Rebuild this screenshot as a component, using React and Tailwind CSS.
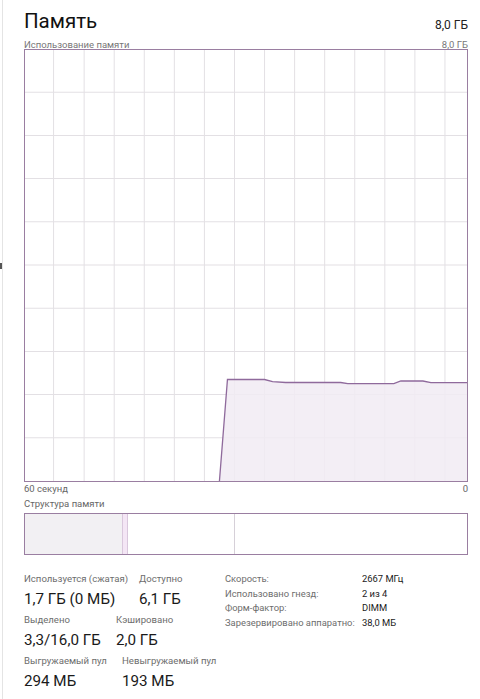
import React from "react";

const font = { fontFamily: 'Roboto, "Noto Sans", sans-serif' };

const vLines = [53.5, 84, 114, 144, 174, 204, 234, 264, 294, 324, 354, 384, 414, 444];
const hLines = [1, 2, 3, 4, 5, 6, 7, 8, 9].map((k) => 49 + k * 43.2);

const usage = [
  [219, 481],
  [227, 379.5],
  [264, 379.5],
  [272, 381.7],
  [285, 382.5],
  [340, 382.5],
  [347, 383.7],
  [393, 383.7],
  [400, 381],
  [422, 381],
  [430, 382.7],
  [466, 382.7],
];

function UsageChart() {
  const line = usage.map((p) => p.join(",")).join(" ");
  const area = line + " 466,481";
  return (
    <div className="h-[433px] w-full border border-[#9a7ea1] bg-white">
      <svg viewBox="25 50 441 431" preserveAspectRatio="none" className="block h-full w-full">
        {vLines.map((x) => (
          <line key={"v" + x} x1={x} y1={50} x2={x} y2={481} stroke="#e3e0e4" strokeWidth="1" />
        ))}
        {hLines.map((y) => (
          <line key={"h" + y} x1={25} y1={y} x2={466} y2={y} stroke="#e3e0e4" strokeWidth="1" />
        ))}
        <polygon points={area} fill="#f1ebf3" fillOpacity="0.85" />
        <polyline points={line} fill="none" stroke="#8f6a9c" strokeWidth="1.3" />
      </svg>
    </div>
  );
}

function Stat({ label, value, className }) {
  return (
    <div className={"whitespace-nowrap " + (className || "")}>
      <div className="text-[9.6px] leading-[14px] text-[#6d6d6d]">{label}</div>
      <div className="mt-[3px] text-[15.2px] leading-[20px] text-[#1a1a1a]">{value}</div>
    </div>
  );
}

export default function App() {
  return (
    <div style={font} className="relative h-[699px] w-[480px] overflow-hidden bg-white">
      {/* splitter at the window's left edge */}
      <div className="absolute left-[2px] top-0 h-full w-px bg-[#e4e4e4]" />
      <div className="absolute left-0 top-[263px] h-[6px] w-[2px] bg-[#555]" />

      <div className="pl-[24px] pr-[12px]">
        <div className="flex h-[40px] items-end justify-between">
          <div className="pb-[5px] text-[20.5px] leading-[28px] text-[#111]">Память</div>
          <div className="pb-[8px] text-[12px] leading-[14px] text-[#222]">8,0 ГБ</div>
        </div>
        <div className="flex h-[9px] items-center justify-between text-[9.5px] leading-[9px] text-[#777]">
          <span>Использование памяти</span>
          <span>8,0 ГБ</span>
        </div>
        <UsageChart />
        <div className="flex h-[14px] items-center justify-between text-[9.5px] text-[#666]">
          <span>60 секунд</span>
          <span>0</span>
        </div>
        <div className="mt-[1px] h-[14px] text-[9.5px] leading-[14px] text-[#666]">Структура памяти</div>
        <div className="mt-[2px] flex h-[42px] w-full border border-[#9a7ea1] bg-white">
          <div className="h-full w-[97px] bg-[#f2f0f3]" />
          <div className="h-full w-[6px] border-x border-[#d9c7dc] bg-[#f4e6f5]" />
          <div className="h-full w-[107px] border-r border-[#d6d0d8]" />
          <div className="h-full flex-1" />
        </div>

        <div className="mt-[17px] flex items-start">
          <div className="w-[201px] shrink-0">
            <div className="flex">
              <Stat className="w-[115px]" label="Используется (сжатая)" value="1,7 ГБ (0 МБ)" />
              <Stat label="Доступно" value="6,1 ГБ" />
            </div>
            <div className="mt-[4px] flex">
              <Stat className="w-[92px]" label="Выделено" value="3,3/16,0 ГБ" />
              <Stat label="Кэшировано" value="2,0 ГБ" />
            </div>
            <div className="mt-[4px] flex">
              <Stat className="w-[98px]" label="Выгружаемый пул" value="294 МБ" />
              <Stat label="Невыгружаемый пул" value="193 МБ" />
            </div>
          </div>
          <div className="grid grid-cols-[137px_auto] auto-rows-[14.5px] whitespace-nowrap text-[9.4px] leading-[14.5px]">
            <span className="text-[#6d6d6d]">Скорость:</span>
            <span className="text-[#1a1a1a]">2667 МГц</span>
            <span className="text-[#6d6d6d]">Использовано гнезд:</span>
            <span className="text-[#1a1a1a]">2 из 4</span>
            <span className="text-[#6d6d6d]">Форм-фактор:</span>
            <span className="text-[#1a1a1a]">DIMM</span>
            <span className="text-[#6d6d6d]">Зарезервировано аппаратно:</span>
            <span className="text-[#1a1a1a]">38,0 МБ</span>
          </div>
        </div>
      </div>
    </div>
  );
}
